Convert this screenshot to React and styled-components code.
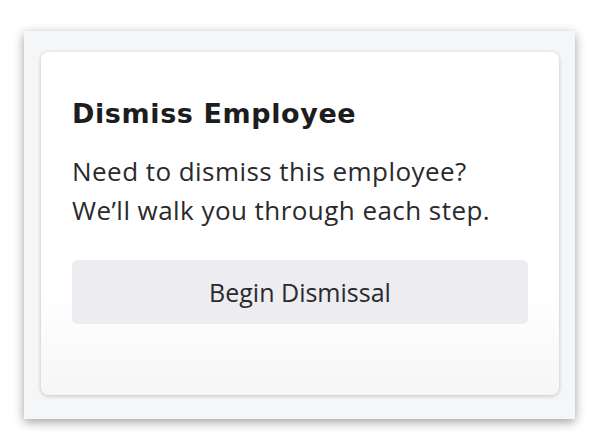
import React from 'react'
import styled, { createGlobalStyle } from 'styled-components'

const GlobalStyle = createGlobalStyle`
	html, body {
		margin: 0;
		padding: 0;
		background: #ffffff;
	}
	body {
		font-family: 'Open Sans', 'Liberation Sans', sans-serif;
	}
`

const Page = styled.div`
	width: 600px;
	height: 448px;
	padding: 31px 25px 29px 24px;
	box-sizing: border-box;
`

const Frame = styled.div`
	height: 100%;
	box-sizing: border-box;
	padding: 21px 16px 24px 17px;
	background: #f5f6f8;
	box-shadow: 0 3px 10px rgba(0, 0, 0, 0.38);
`

const Card = styled.div`
	height: 100%;
	box-sizing: border-box;
	padding: 44px 31px 0 31px;
	background: linear-gradient(to bottom, #ffffff 70%, #f6f6f7 100%);
	border-radius: 8px;
	box-shadow: 0 1px 4px rgba(0, 0, 0, 0.22);
	display: flex;
	flex-direction: column;
`

const Title = styled.h2`
	margin: 0;
	font-family: 'DejaVu Sans', sans-serif;
	font-weight: 700;
	font-size: 27px;
	line-height: 36px;
	color: #1d1d20;
	letter-spacing: 0.6px;
`

const Message = styled.p`
	margin: 20px 0 0;
	font-size: 26px;
	line-height: 39px;
	letter-spacing: 0.45px;
	color: #2a2a2e;
`

const Button = styled.button`
	margin-top: 30px;
	height: 64px;
	width: 100%;
	border: none;
	border-radius: 5px;
	background: #ececf1;
	font-family: 'Open Sans', sans-serif;
	font-size: 25px;
	color: #2a2a2e;
	cursor: pointer;
`

export default function App() {
	return (
		<>
			<GlobalStyle />
			<Page>
				<Frame>
					<Card>
						<Title>Dismiss Employee</Title>
						<Message>
							Need to dismiss this employee?
							<br />
							We’ll walk you through each step.
						</Message>
						<Button>Begin Dismissal</Button>
					</Card>
				</Frame>
			</Page>
		</>
	)
}
